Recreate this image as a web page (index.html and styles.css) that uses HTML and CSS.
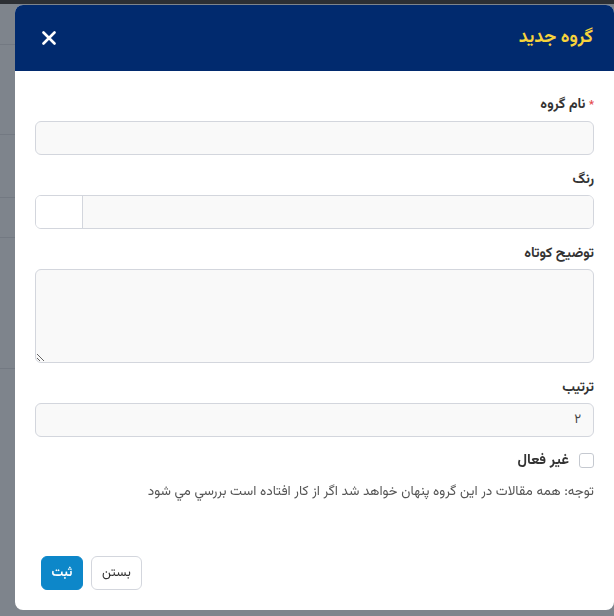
FILE: index.html
```html
<!DOCTYPE html>
<html lang="fa" dir="rtl">
<head>
  <meta charset="UTF-8" />
  <meta name="viewport" content="width=device-width, initial-scale=1.0" />
  <title>گروه جدید</title>
  <link rel="stylesheet" href="styles.css">
</head>
<body>
<div class="page">
  <div class="topbar"></div>
  <div class="page-row r1"></div>
  <div class="page-row r2"></div>
  <div class="page-row r3"></div>
  <div class="page-row r4"></div>
  <div class="page-row r5"></div>
</div>
<div class="modal">
  <div class="modal-header">
    <h2>گروه جدید</h2>
    <button class="close-btn" aria-label="close">
      <svg width="14" height="14" viewBox="0 0 14 14"><path d="M1.5 1.5 L12.5 12.5 M12.5 1.5 L1.5 12.5" stroke="#fff" stroke-width="2.6" stroke-linecap="round"/></svg>
    </button>
  </div>
  <div class="modal-body">
    <div class="field">
      <label><span class="req">*</span> نام گروه</label>
      <input type="text" class="input" />
    </div>
    <div class="field">
      <label>رنگ</label>
      <div class="color-input">
        <input type="text" class="input" />
        <span class="swatch"></span>
      </div>
    </div>
    <div class="field">
      <label>توضیح کوتاه</label>
      <textarea class="input textarea"></textarea>
    </div>
    <div class="field">
      <label>ترتیب</label>
      <input type="text" class="input" value="۲" />
    </div>
    <div class="check-row">
      <span class="checkbox"></span>
      <span class="check-label">غير فعال</span>
    </div>
    <p class="note">توجه: همه مقالات در این گروه پنهان خواهد شد اگر از کار افتاده است بررسي مي شود</p>
  </div>
  <div class="modal-footer">
    <button class="btn btn-primary">ثبت</button>
    <button class="btn btn-light">بستن</button>
  </div>
</div>
</body>
</html>
```

FILE: styles.css
```css
* {
  box-sizing: border-box;
}
html, body {
  margin: 0;
  padding: 0;
  height: 100%;
  overflow: hidden;
  font-family: Vazirmatn, "DejaVu Sans", "Noto Sans", sans-serif;
  background: #7e848c;
  color: #333;
}
.page {
  height: 100%;
}
.topbar {
  height: 4px;
  background: #2c2f34;
}
.page-row {
  border-bottom: 1px solid #737982;
}
.r1 { height: 41px; }
.r2 { height: 90px; }
.r3 { height: 63px; }
.r4 { height: 40px; }
.r5 { height: 131px; }

.modal {
  position: fixed;
  top: 5px;
  left: 15px;
  width: 599px;
  height: 605px;
  background: #fff;
  border-radius: 8px;
  overflow: hidden;
  display: flex;
  flex-direction: column;
}
.modal-header {
  height: 66px;
  background: #012a6e;
  display: flex;
  align-items: center;
  justify-content: space-between;
  padding: 0 21px 0 27px;
}
.modal-header h2 {
  margin: 0;
  color: #f7d33c;
  font-size: 18px;
  font-weight: bold;
}
.close-btn {
  background: none;
  border: none;
  padding: 0;
  width: 14px;
  height: 14px;
  display: flex;
  cursor: pointer;
}
.modal-body {
  padding: 24px 20px 0 20px;
  flex: 1;
}
.field {
  margin-bottom: 15px;
}
.field label {
  display: block;
  font-size: 14px;
  font-weight: bold;
  line-height: 20px;
  margin-bottom: 5px;
  color: #333;
}
.req {
  color: #e5484d;
  font-size: 11px;
}
.input {
  display: block;
  width: 100%;
  height: 34px;
  border: 1px solid #d3d6dd;
  border-radius: 6px;
  background: #f9f9f9;
  font-family: inherit;
  font-size: 13px;
  color: #444;
  padding: 0 12px;
}
.textarea {
  height: 94px;
  resize: vertical;
}
.color-input {
  display: flex;
  height: 34px;
  border: 1px solid #d3d6dd;
  border-radius: 6px;
  overflow: hidden;
}
.color-input .input {
  border: none;
  border-radius: 0;
  height: 32px;
  flex: 1;
}
.swatch {
  width: 47px;
  background: #fff;
  border-right: 1px solid #d3d6dd;
}
.check-row {
  display: flex;
  align-items: center;
  gap: 10px;
  height: 16px;
}
.checkbox {
  width: 15px;
  height: 15px;
  border: 1px solid #c5c9d0;
  border-radius: 3px;
  background: #fff;
}
.check-label {
  font-size: 14.5px;
  font-weight: bold;
  color: #333;
}
.note {
  margin: 14px 0 0;
  font-size: 13.5px;
  color: #555;
  line-height: 20px;
}
.modal-footer {
  display: flex;
  gap: 8px;
  justify-content: flex-start;
  padding: 0 0 20px 26px;
  direction: ltr;
}
.btn {
  height: 34px;
  border-radius: 6px;
  font-family: inherit;
  font-size: 13px;
  padding: 0 9px;
  cursor: pointer;
}
.btn-primary {
  background: #0d87c9;
  color: #fff;
  border: 1px solid #0d87c9;
  font-weight: bold;
  width: 42px;
}
.btn-light {
  background: #fff;
  color: #333;
  border: 1px solid #d3d6dd;
  width: 51px;
}
```
